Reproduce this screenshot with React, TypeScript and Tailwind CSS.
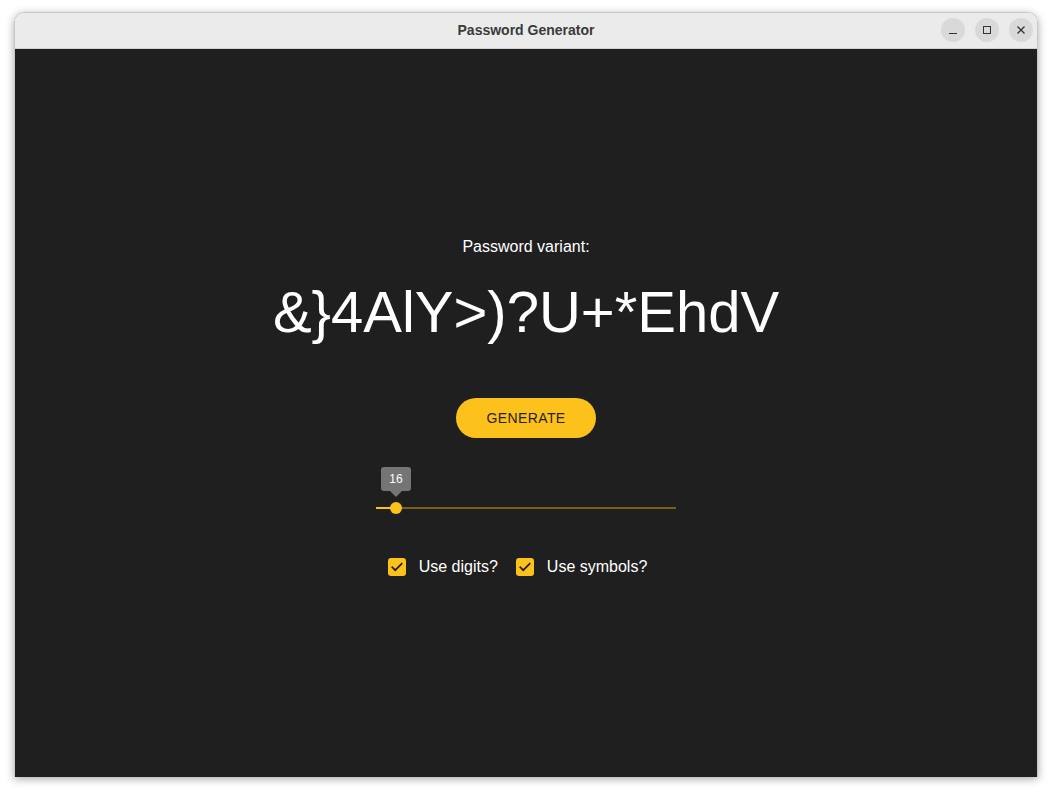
import React from "react";

function CheckIcon() {
  return (
    <svg width="14" height="14" viewBox="0 0 24 24" fill="none">
      <path d="M4 12.5l5 5L20 6.5" stroke="#1f1f1f" strokeWidth="3" strokeLinecap="square" />
    </svg>
  );
}

function Check({ label, last }: { label: string; last?: boolean }) {
  return (
    <div className={"flex items-center h-6 " + (last ? "pr-[17px]" : "pr-[18px]")}>
      <div className="w-[18px] h-[18px] rounded-[3px] bg-[#fdc11c] flex items-center justify-center">
        <CheckIcon />
      </div>
      <span className="ml-[13px] text-white text-[16px] leading-6">{label}</span>
    </div>
  );
}

export default function App() {
  return (
    <div
      className="w-[1052px] h-[794px] bg-white pt-[12px] pl-[14px]"
      style={{ fontFamily: '"Liberation Sans", Arial, sans-serif' }}
    >
      <div className="w-[1024px] h-[765px] flex flex-col rounded-t-[10px] overflow-hidden shadow-[0_2px_8px_rgba(0,0,0,0.35)] border border-[#c8c8c8] border-b-0">
        {/* Title bar */}
        <div className="h-[36px] shrink-0 bg-[#ebebeb] border-b border-[#d2d2d2] relative flex items-center justify-center">
          <span className="text-[14px] font-bold text-[#3a3a3a]">Password Generator</span>
          <div className="absolute right-[4px] top-[5px] flex gap-[10px]">
            <div className="w-6 h-6 rounded-full bg-[#d9d9d9] flex items-center justify-center">
              <div className="w-[8px] h-[1px] bg-[#333] mt-[6px]" />
            </div>
            <div className="w-6 h-6 rounded-full bg-[#d9d9d9] flex items-center justify-center">
              <div className="w-[8px] h-[8px] border border-[#333]" />
            </div>
            <div className="w-6 h-6 rounded-full bg-[#d9d9d9] flex items-center justify-center">
              <svg width="10" height="10" viewBox="0 0 10 10">
                <path d="M1.5 1.5L8.5 8.5M8.5 1.5L1.5 8.5" stroke="#333" strokeWidth="1.3" />
              </svg>
            </div>
          </div>
        </div>
        {/* Content */}
        <div className="flex-1 bg-[#1f1f1f] flex flex-col items-center pt-[186px]">
          <div className="text-white text-[16px] leading-6">Password variant:</div>
          <div className="mt-[24px] text-white text-[58px] leading-[58px]">&amp;{"}"}4AlY&gt;)?U+*EhdV</div>
          <button className="mt-[57px] w-[140px] h-[40px] rounded-full bg-[#fdc11c] text-[#1f1f1f] text-[14px] tracking-[0.4px] font-medium">
            GENERATE
          </button>
          {/* Slider */}
          <div className="mt-[64px] relative w-[300px] h-[12px]">
            <div className="absolute left-0 right-0 top-[5px] h-[2px] bg-[#fdc11c] opacity-40" />
            <div className="absolute left-0 w-[20px] top-[5px] h-[2px] bg-[#fdc11c]" />
            <div className="absolute left-[14px] top-0 w-[12px] h-[12px] rounded-full bg-[#fdc11c]" />
            <div className="absolute left-[5px] top-[-35px] w-[30px] h-[24px] rounded-[3px] bg-[#757575] text-white text-[12px] flex items-center justify-center">
              16
            </div>
            <div className="absolute left-[14px] top-[-11px] w-0 h-0 border-l-[6px] border-r-[6px] border-t-[6px] border-l-transparent border-r-transparent border-t-[#757575]" />
          </div>
          {/* Checkboxes */}
          <div className="mt-[41px] flex items-center">
            <Check label="Use digits?" />
            <Check label="Use symbols?" last />
          </div>
        </div>
      </div>
    </div>
  );
}
